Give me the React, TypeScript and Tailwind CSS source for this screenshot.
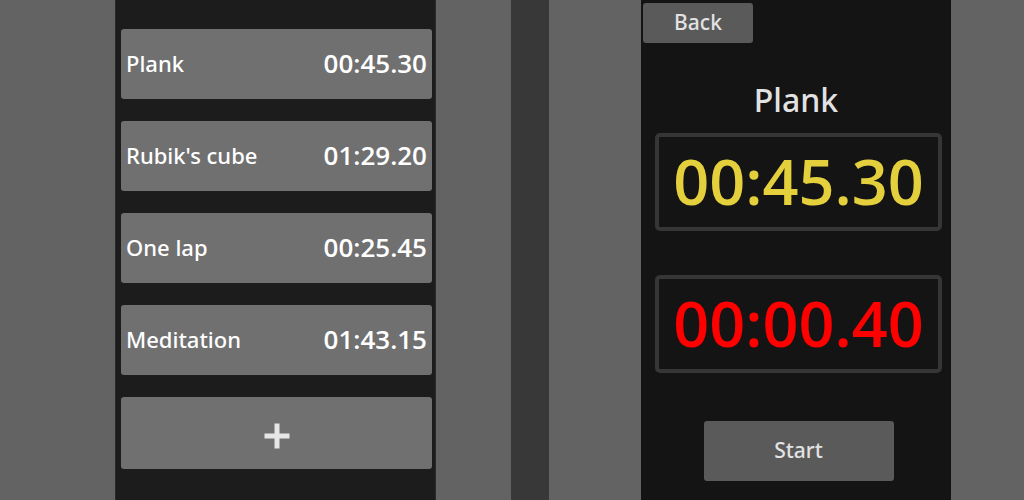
interface Timer {
  name: string;
  time: string;
}

const timers: Timer[] = [
  { name: "Plank", time: "00:45.30" },
  { name: "Rubik's cube", time: "01:29.20" },
  { name: "One lap", time: "00:25.45" },
  { name: "Meditation", time: "01:43.15" },
];

function TimerList() {
  return (
    <section
      aria-label="Timers"
      className="col-start-2 border-x border-[#2a2a2a] bg-[#1c1c1c] pt-[29px] pr-[3px] pl-[5px]"
    >
      <ul className="flex flex-col gap-[22px]">
        {timers.map((timer) => (
          <li key={timer.name}>
            <button
              type="button"
              className="flex h-[70px] w-full items-center justify-between rounded-[3px] bg-[#707070] px-[5px] pb-px text-white"
            >
              <span className="text-[22px]">{timer.name}</span>
              <span className="font-['Open_Sans','Noto_Sans',sans-serif] text-[26px] font-semibold">
                {timer.time}
              </span>
            </button>
          </li>
        ))}
        <li>
          <button
            type="button"
            aria-label="Add timer"
            className="flex h-[72px] w-full items-center justify-center rounded-[3px] bg-[#707070] pt-[5px] text-[#e6e6e6]"
          >
            <svg viewBox="0 0 26 26" className="size-[26px]" fill="currentColor" aria-hidden="true">
              <path d="M10.5 0.5h5v10h10v5h-10v10h-5v-10h-10v-5h10z" />
            </svg>
          </button>
        </li>
      </ul>
    </section>
  );
}

function Readout({ time, color }: { time: string; color: string }) {
  return (
    <div
      className={`flex h-[98px] w-full items-center justify-center rounded-[5px] border-4 border-[#363636] pb-1 font-['Open_Sans','Noto_Sans',sans-serif] text-[63px] leading-none font-semibold ${color}`}
    >
      {time}
    </div>
  );
}

function TimerDetail() {
  return (
    <section aria-label="Timer" className="col-start-6 bg-[#141414] pt-[3px]">
      <button
        type="button"
        className="ml-[2px] block h-10 w-[110px] rounded-[3px] bg-[#5a5a5a] text-[21px] text-[#e2e2e2]"
      >
        Back
      </button>
      <h1 className="mt-9 text-center text-[32px] leading-[42px] text-[#e2e2e2]">Plank</h1>
      <div className="mt-3 flex flex-col items-center gap-11 pr-[9px] pl-[14px]">
        <Readout time="00:45.30" color="text-[#e4cf3c]" />
        <Readout time="00:00.40" color="text-[#ff0000]" />
        <button
          type="button"
          className="mt-1 h-[60px] w-[190px] rounded-[3px] bg-[#5a5a5a] text-[21px] text-[#e2e2e2]"
        >
          Start
        </button>
      </div>
    </section>
  );
}

export default function App() {
  return (
    <main className="grid min-h-screen grid-cols-[115fr_321fr_75fr_38fr_92fr_310fr_73fr] bg-[#636363] font-['Noto_Sans','Open_Sans',sans-serif] font-medium">
      <TimerList />
      <div className="col-start-4 bg-[#383838]" />
      <TimerDetail />
    </main>
  );
}
